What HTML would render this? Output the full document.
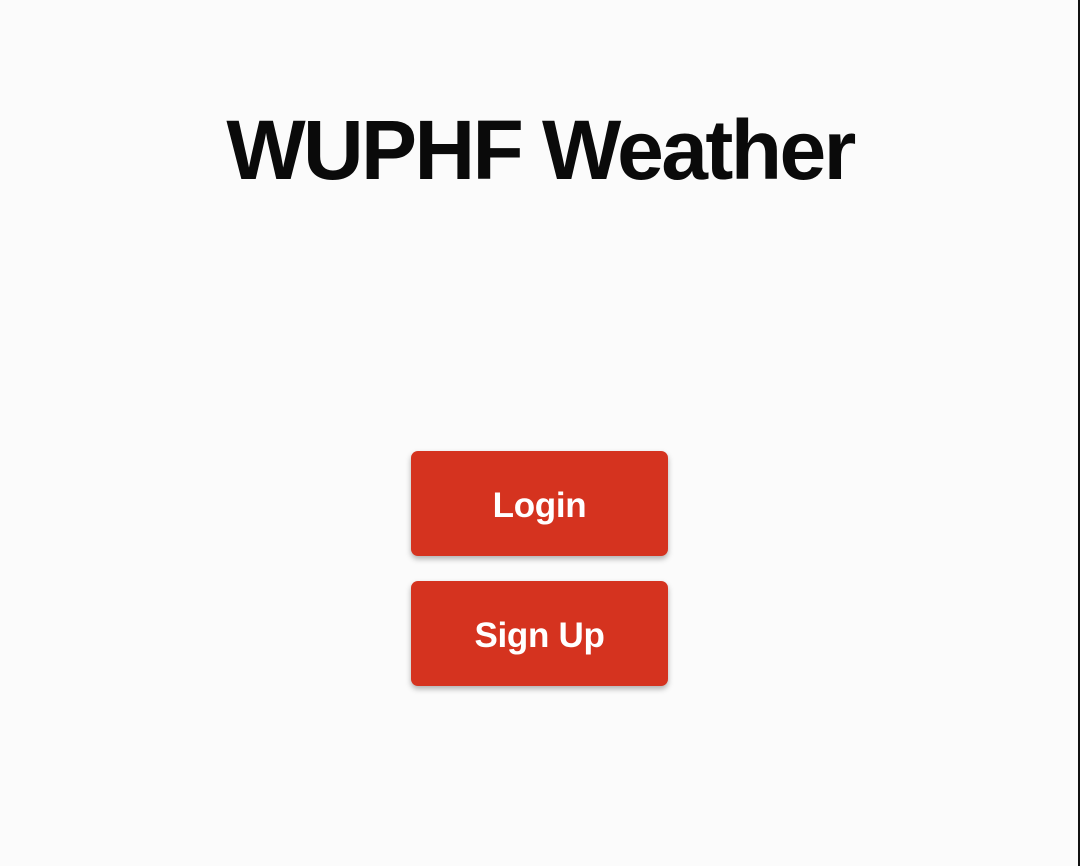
<!DOCTYPE html>
<html><head><style>
html,body{margin:0;padding:0;}
body{width:1080px;height:866px;background:#fbfbfb;position:relative;overflow:hidden;font-family:"Liberation Sans",sans-serif;}
.edge{position:absolute;right:0;top:0;width:2px;height:866px;background:#111;}
h1{position:absolute;left:0;width:1080px;top:100px;margin:0;text-align:center;font-size:84px;font-weight:bold;letter-spacing:-2.6px;color:#0a0a0a;line-height:100px;}
.btn{position:absolute;left:411px;width:257px;height:105px;background:#d5331f;border-radius:7px;box-shadow:0 3px 6px rgba(0,0,0,0.3);color:#fff;font-weight:bold;font-size:35px;text-align:center;line-height:109px;letter-spacing:-0.3px;}
</style></head><body>
<div class="edge"></div>
<h1>WUPHF Weather</h1>
<div class="btn" style="top:451px">Login</div>
<div class="btn" style="top:581px">Sign Up</div>
</body></html>
